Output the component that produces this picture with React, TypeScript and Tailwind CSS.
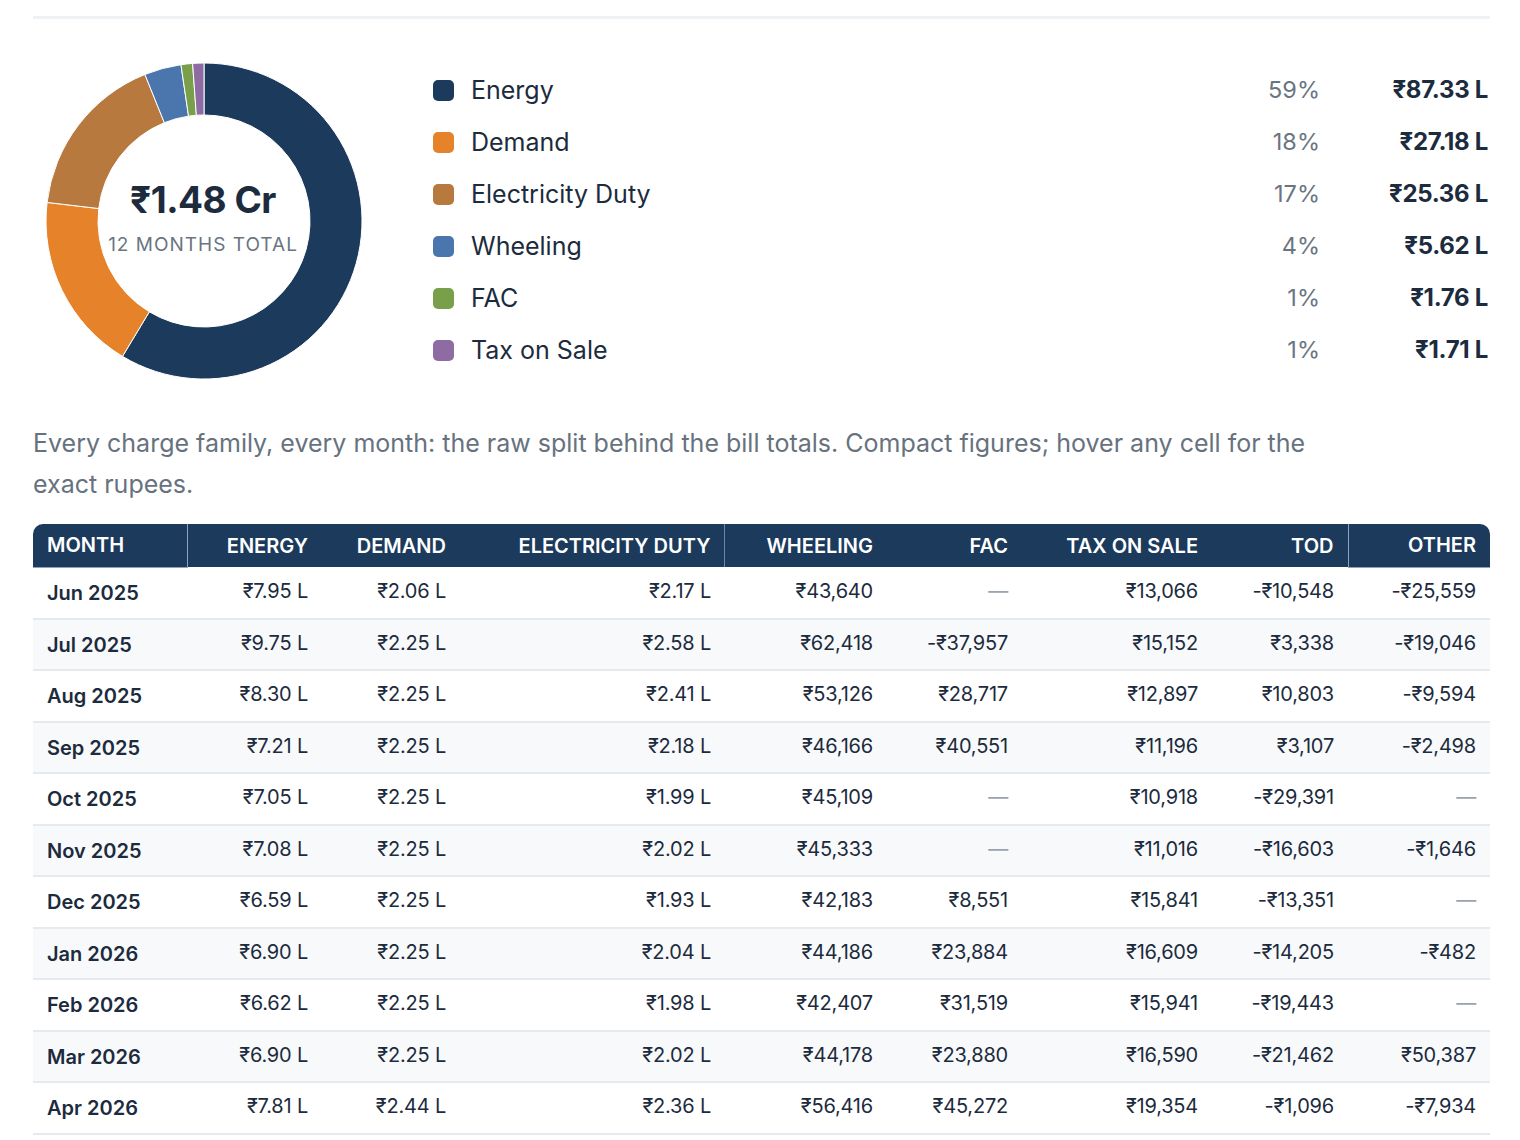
import React from 'react';

type Slice = { label: string; color: string; pct: string; value: string; amount: number };

const slices: Slice[] = [
  { label: 'Energy', color: '#1b3a5c', pct: '59%', value: '₹87.33 L', amount: 87.33 },
  { label: 'Demand', color: '#e6822a', pct: '18%', value: '₹27.18 L', amount: 27.18 },
  { label: 'Electricity Duty', color: '#b7793d', pct: '17%', value: '₹25.36 L', amount: 25.36 },
  { label: 'Wheeling', color: '#4b76ad', pct: '4%', value: '₹5.62 L', amount: 5.62 },
  { label: 'FAC', color: '#7a9f4b', pct: '1%', value: '₹1.76 L', amount: 1.76 },
  { label: 'Tax on Sale', color: '#8e6ca3', pct: '1%', value: '₹1.71 L', amount: 1.71 },
];

const rows: string[][] = [
  ['Jun 2025', '₹7.95 L', '₹2.06 L', '₹2.17 L', '₹43,640', '—', '₹13,066', '-₹10,548', '-₹25,559'],
  ['Jul 2025', '₹9.75 L', '₹2.25 L', '₹2.58 L', '₹62,418', '-₹37,957', '₹15,152', '₹3,338', '-₹19,046'],
  ['Aug 2025', '₹8.30 L', '₹2.25 L', '₹2.41 L', '₹53,126', '₹28,717', '₹12,897', '₹10,803', '-₹9,594'],
  ['Sep 2025', '₹7.21 L', '₹2.25 L', '₹2.18 L', '₹46,166', '₹40,551', '₹11,196', '₹3,107', '-₹2,498'],
  ['Oct 2025', '₹7.05 L', '₹2.25 L', '₹1.99 L', '₹45,109', '—', '₹10,918', '-₹29,391', '—'],
  ['Nov 2025', '₹7.08 L', '₹2.25 L', '₹2.02 L', '₹45,333', '—', '₹11,016', '-₹16,603', '-₹1,646'],
  ['Dec 2025', '₹6.59 L', '₹2.25 L', '₹1.93 L', '₹42,183', '₹8,551', '₹15,841', '-₹13,351', '—'],
  ['Jan 2026', '₹6.90 L', '₹2.25 L', '₹2.04 L', '₹44,186', '₹23,884', '₹16,609', '-₹14,205', '-₹482'],
  ['Feb 2026', '₹6.62 L', '₹2.25 L', '₹1.98 L', '₹42,407', '₹31,519', '₹15,941', '-₹19,443', '—'],
  ['Mar 2026', '₹6.90 L', '₹2.25 L', '₹2.02 L', '₹44,178', '₹23,880', '₹16,590', '-₹21,462', '₹50,387'],
  ['Apr 2026', '₹7.81 L', '₹2.44 L', '₹2.36 L', '₹56,416', '₹45,272', '₹19,354', '-₹1,096', '-₹7,934'],
];

const headers = ['Month', 'Energy', 'Demand', 'Electricity Duty', 'Wheeling', 'FAC', 'Tax on Sale', 'TOD', 'Other'];
const widths = [154, 135, 138, 264, 163, 135, 190, 136, 142];

const arcPath = (cx: number, cy: number, rOut: number, rIn: number, a0: number, a1: number) => {
  const pt = (r: number, a: number) => [cx + r * Math.sin(a), cy - r * Math.cos(a)];
  const large = a1 - a0 > Math.PI ? 1 : 0;
  const [x0, y0] = pt(rOut, a0);
  const [x1, y1] = pt(rOut, a1);
  const [x2, y2] = pt(rIn, a1);
  const [x3, y3] = pt(rIn, a0);
  return `M${x0} ${y0} A${rOut} ${rOut} 0 ${large} 1 ${x1} ${y1} L${x2} ${y2} A${rIn} ${rIn} 0 ${large} 0 ${x3} ${y3} Z`;
};

const Donut: React.FC = () => {
  const total = slices.reduce((s, x) => s + x.amount, 0);
  let acc = 0;
  return (
    <div className="relative w-[318px] h-[318px] shrink-0">
      <svg width="318" height="318" viewBox="0 0 318 318">
        {slices.map((s) => {
          const a0 = (acc / total) * Math.PI * 2;
          acc += s.amount;
          const a1 = (acc / total) * Math.PI * 2;
          return (
            <path
              key={s.label}
              d={arcPath(159, 159, 158, 106, a0, a1)}
              fill={s.color}
              stroke="#ffffff"
              strokeWidth="1"
            />
          );
        })}
      </svg>
      <div className="absolute inset-0 flex flex-col items-center justify-center pb-[8px] pr-[2px]">
        <span className="text-[37px] font-bold text-[#1c2b3d] leading-none tracking-[-0.5px]">₹1.48 Cr</span>
        <span className="mt-[17px] text-[19px] text-[#6a7581] tracking-[1px] leading-none">12 MONTHS TOTAL</span>
      </div>
    </div>
  );
};

const App: React.FC = () => {
  return (
    <div className="bg-white min-h-[1140px] pl-[33px] pr-[32px] pt-[16px] font-['Inter','Noto_Sans',sans-serif] text-[#1c2b3d]">
      <div className="h-[3px] bg-[#eff2f5] mr-[-2px]" />

      <div className="flex items-center mt-[43px] pl-[12px]">
        <Donut />
        <div className="flex-1 ml-[70px] flex flex-col gap-[30px] pb-[2px]">
          {slices.map((s) => (
            <div key={s.label} className="flex items-center h-[22px]">
              <span className="w-[21px] h-[21px] rounded-[5px] shrink-0" style={{ backgroundColor: s.color }} />
              <span className="ml-[17px] flex-1 text-[25px] leading-none">{s.label}</span>
              <span className="w-[100px] text-right text-[23.5px] text-[#6a7581] leading-none">{s.pct}</span>
              <span className="w-[168px] text-right text-[24px] font-bold leading-none tracking-[-0.3px]">{s.value}</span>
            </div>
          ))}
        </div>
      </div>

      <p className="mt-[43px] w-[1320px] text-[25px] leading-[41px] text-[#67727e]">
        Every charge family, every month: the raw split behind the bill totals. Compact figures; hover any cell for the
        exact rupees.
      </p>

      <table className="mt-[19px] border-collapse table-fixed w-[1457px]">
        <colgroup>
          {widths.map((w, i) => (
            <col key={i} style={{ width: w }} />
          ))}
        </colgroup>
        <thead>
          <tr className="h-[43px] bg-[#1b3a5c] text-white text-[20px] font-semibold uppercase">
            {headers.map((h, i) => (
              <th
                key={h}
                className={[
                  'font-semibold',
                  i === 3 ? 'pl-[14px] pr-[13px]' : 'px-[14px]',
                  i === 0 ? 'text-left rounded-tl-[10px] border-r border-b border-[#8ea3ba]' : 'text-right',
                  i === 3 ? 'border-r border-[#6b87a6]' : '',
                  i === 8 ? 'rounded-tr-[10px] border-l border-b border-[#8ea3ba]' : '',
                ].join(' ')}
              >
                {h}
              </th>
            ))}
          </tr>
        </thead>
        <tbody>
          {rows.map((r, ri) => (
            <tr
              key={r[0]}
              className={`h-[51.5px] border-b-2 border-[#e6e9ed] ${ri % 2 === 1 ? 'bg-[#f8f9fb]' : 'bg-white'}`}
            >
              {r.map((c, ci) => (
                <td
                  key={ci}
                  className={
                    ci === 0
                      ? 'px-[14px] text-left text-[20px] font-semibold pt-[1px]'
                      : `${ci === 3 ? 'pl-[14px] pr-[13px]' : 'px-[14px]'} text-right text-[20px] tracking-[-0.2px] pb-[3px] ${c === '—' ? 'text-[#9aa3ad]' : ''}`
                  }
                >
                  {c}
                </td>
              ))}
            </tr>
          ))}
        </tbody>
      </table>
    </div>
  );
};

export default App;
